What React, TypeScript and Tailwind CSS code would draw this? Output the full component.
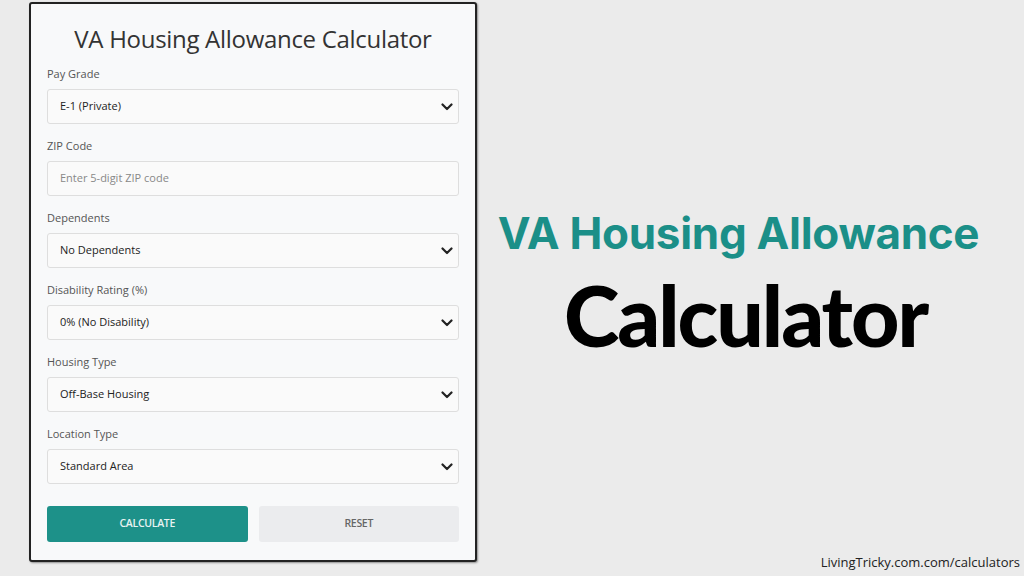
import React from "react"

const fields = [
  { label: "Pay Grade", value: "E-1 (Private)", select: true },
  { label: "ZIP Code", value: "Enter 5-digit ZIP code", select: false },
  { label: "Dependents", value: "No Dependents", select: true },
  { label: "Disability Rating (%)", value: "0% (No Disability)", select: true },
  { label: "Housing Type", value: "Off-Base Housing", select: true },
  { label: "Location Type", value: "Standard Area", select: true },
]

function Chevron() {
  return (
    <svg width="12" height="8" viewBox="0 0 12 8" className="text-[#222]">
      <path d="M1.5 1.5 L6 6 L10.5 1.5" fill="none" stroke="currentColor" strokeWidth="2.2" strokeLinecap="round" strokeLinejoin="round" />
    </svg>
  )
}

export default function App() {
  return (
    <div className="w-[1024px] h-[576px] bg-[#ebebeb] flex relative overflow-hidden font-['Open_Sans',sans-serif]">
      <div className="ml-[29px] mt-[2px] w-[448px] h-[560px] bg-[#f8f9fa] border-2 border-[#222] rounded-[3px] shadow-[1px_1px_2px_rgba(0,0,0,0.4)] px-4 pt-[19px]">
        <h1 className="text-center text-[24px] leading-[32px] text-[#333] font-medium tracking-[-0.3px]">VA Housing Allowance Calculator</h1>
        <div className="mt-[11px] flex flex-col gap-[14px]">
          {fields.map((f) => (
            <div key={f.label}>
              <div className="text-[11px] leading-[15px] text-[#555] mb-[8px]">{f.label}</div>
              <div className="h-[35px] bg-[#fafafa] border border-[#dedede] rounded-[3px] flex items-center justify-between pl-3 pr-[5px]">
                <span className={f.select ? "text-[11px] text-[#222]" : "text-[11px] text-[#888]"}>{f.value}</span>
                {f.select && <Chevron />}
              </div>
            </div>
          ))}
        </div>
        <div className="mt-[22px] flex gap-[11px]">
          <div className="w-[201px] h-[36px] bg-[#1d9189] rounded-[3px] flex items-center justify-center text-[10.5px] font-semibold text-[#e8f3f2] tracking-[-0.3px]">CALCULATE</div>
          <div className="w-[201px] h-[36px] bg-[#ebecee] rounded-[3px] flex items-center justify-center text-[10.5px] font-semibold text-[#666] tracking-[-0.3px]">RESET</div>
        </div>
      </div>
      <div className="flex-1 flex flex-col items-center pt-[205px]">
        <div className="mr-[24px] text-[44px] leading-[56px] font-bold text-[#1b8f88] font-['Inter',sans-serif] tracking-[-0.3px]">VA Housing Allowance</div>
        <div className="mr-[10px] mt-[9px] text-[84px] leading-[90px] font-black text-black font-['Lato',sans-serif] tracking-[-2px]">Calculator</div>
      </div>
      <div className="absolute right-[4px] bottom-[4px] text-[13px] text-[#222] font-['Open_Sans',sans-serif]">LivingTricky.com.com/calculators</div>
    </div>
  )
}
